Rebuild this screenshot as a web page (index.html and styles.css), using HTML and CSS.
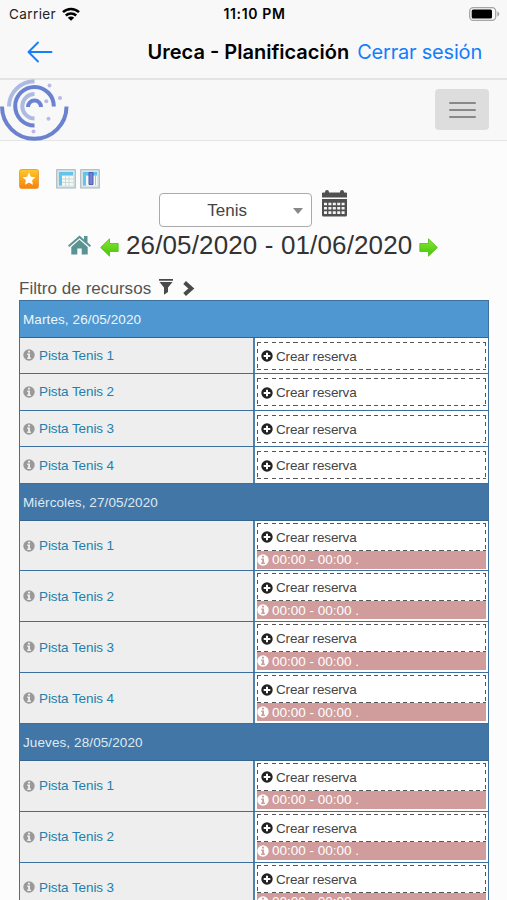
FILE: index.html
```html
<!DOCTYPE html>
<html lang="es">
<head>
    <meta charset="UTF-8">
    <meta name="viewport" content="width=device-width, initial-scale=1.0">
    <title>Ureca - Planificación</title>
    <link rel="stylesheet" href="styles.css">
</head>
<body>
    <!-- Shared icons -->
    <svg class="icon-defs" width="0" height="0">
        <symbol id="icon-info" viewBox="0 0 12 12">
            <path fill="currentColor" fill-rule="evenodd" d="M6 .3a5.7 5.7 0 1 0 0 11.4A5.7 5.7 0 0 0 6 .3zM5 1.8h2v1.6H5zM4.2 4.6H7v3.9h.9V10H4.2V8.5h.9V6h-.9z"/>
        </symbol>
        <symbol id="icon-plus" viewBox="0 0 12 12">
            <path fill="currentColor" fill-rule="evenodd" d="M6 .3a5.7 5.7 0 1 0 0 11.4A5.7 5.7 0 0 0 6 .3zM5 2.7h2V5h2.3v2H7v2.3H5V7H2.7V5H5z"/>
        </symbol>
        <symbol id="icon-arrow" viewBox="0 0 18 18">
            <path fill="url(#green)" stroke="#4fc01c" stroke-width=".8" stroke-linejoin="round" d="M.6 9 9 .8v4.400h8.200v7.600H9v4.400z"/>
        </symbol>
        <linearGradient id="green" x1="0" y1="0" x2="0" y2="1">
            <stop offset="0" stop-color="#8fe43a"/>
            <stop offset="1" stop-color="#3fc800"/>
        </linearGradient>
        <linearGradient id="orange" x1="0" y1="0" x2="0" y2="1">
            <stop offset="0" stop-color="#ffc928"/>
            <stop offset="1" stop-color="#f5820b"/>
        </linearGradient>
    </svg>

    <header class="app-header">
        <div class="status-bar">
            <div class="carrier">
                Carrier
                <svg width="18" height="14" viewBox="0 0 18 14" fill="none" stroke="#000" stroke-width="2.500">
                    <path d="M1 5.200a11.500 11.500 0 0 1 16 0M3.800 8.500a7.500 7.500 0 0 1 10.400 0"/>
                    <path fill="#000" stroke="none" d="M9 13.700 5.800 10.700a4.600 4.600 0 0 1 6.400 0z"/>
                </svg>
            </div>
            <div class="clock">11:10 PM</div>
            <svg class="battery" width="31" height="14" viewBox="0 0 31 14">
                <rect x=".7" y=".7" width="26" height="12.600" rx="3.500" fill="none" stroke="#a5a5a5" stroke-width="1.300"/>
                <rect x="2.700" y="2.500" width="20.300" height="9" rx="1.500"/>
                <path fill="#a5a5a5" d="M28.300 4.500c2.700.8 2.700 4.200 0 5z"/>
            </svg>
        </div>
        <div class="nav-bar">
            <svg class="back" width="26" height="22" viewBox="0 0 26 22" fill="none" stroke="#147efb" stroke-width="1.900" stroke-linecap="round" stroke-linejoin="round">
                <path d="M24.500 11H1.500M11 1.500 1.500 11l9.500 9.500"/>
            </svg>
            <div class="nav-title">Ureca - Planificación</div>
            <a class="logout">Cerrar sesión</a>
        </div>
    </header>

    <div class="site-bar">
        <svg class="logo" width="70" height="62" viewBox="0 0 70 62" fill="none" stroke-width="4">
            <path stroke="#6a82d0" d="M2 27.500a32 32 0 0 0 64.500 0" />
            <path stroke="#adbbe3" d="M34.500 2.200A25.500 25.500 0 0 0 9 27.500M34.500 15A12 12 0 0 0 34.500 39.500"/>
            <path stroke="#6a82d0" d="M34.500 46.500A19.300 19.300 0 1 1 53.800 27.500M28 28a6.500 6.500 0 0 1 13 0"/>
            <g fill="#b8b9e6">
                <circle cx="49.500" cy="6.500" r="2"/>
                <circle cx="60" cy="19" r="2"/>
                <circle cx="46.300" cy="22.300" r="2"/>
                <circle cx="48.500" cy="39.700" r="2"/>
                <circle cx="33.500" cy="52.500" r="2"/>
            </g>
        </svg>
        <button class="menu-button">
            <span></span>
            <span></span>
            <span></span>
        </button>
    </div>

    <main class="content">
        <div class="toolbar">
            <svg width="20" height="20" viewBox="0 0 20 20">
                <rect x=".5" y=".5" width="19" height="19" rx="2" fill="url(#orange)" stroke="#eda04a"/>
                <path fill="#fff" d="m10 3.500 1.900 4.200 4.600.5-3.400 3.100.9 4.500-4-2.300-4 2.300.9-4.500-3.400-3.100 4.600-.5z"/>
            </svg>
            <svg class="view-icon" width="20" height="20" viewBox="0 0 20 20">
                <rect x=".7" y=".7" width="18.600" height="18.300" fill="#d8e5e8" stroke="#a9b4b7"/>
                <path fill="#f5f8f3" d="M6 6.500h11v10H6z"/>
                <path fill="#62c4ec" d="M3 3h14v3.500H6v10H3z"/>
                <path stroke="#cbdad6" d="M6 10h11M6 13.500h11M9.500 7v10M13 7v10" fill="none"/>
            </svg>
            <svg width="20" height="20" viewBox="0 0 20 20">
                <rect x=".7" y=".7" width="18.600" height="18.300" fill="#d8e5e8" stroke="#a9b4b7"/>
                <path fill="#f5f8f3" d="M6 6.500h11v10H6z"/>
                <path fill="#62c4ec" d="M3 3h14v3.500H6v10H3z"/>
                <path fill="#7180d0" stroke="#4e5bb5" d="M9 3.500h4v12H9z"/>
                <path stroke="#9ccbd8" d="M15.500 6v10"/>
            </svg>
        </div>

        <div class="picker">
            <div class="select">
                <span>Tenis</span>
                <i class="caret"></i>
            </div>
            <svg width="25" height="27" viewBox="0 0 25 27">
                <path fill="#505050" d="M1 2.500h2V2a1.700 1.700 0 0 1 4 0v.5h11V2a1.700 1.700 0 0 1 4 0v.5h2a1 1 0 0 1 1 1v4H0v-4a1 1 0 0 1 1-1zM0 9h25v16a1.500 1.500 0 0 1-1.500 1.500h-22A1.500 1.500 0 0 1 0 25z"/>
                <path fill="none" stroke="#f4f4f4" stroke-width="2.600" stroke-dasharray="3 1.400" d="M2 14h21M2 18.300h21M2 22.600h21"/>
            </svg>
        </div>

        <div class="week">
            <svg class="home" width="23" height="20" viewBox="0 0 23 20">
                <path fill="#5b9292" d="M0 10.500 11.500.5l4.500 4V1h3.500v6.500l3.500 3-1.200 1.500L11.500 3.200 1.200 12z"/>
                <path fill="#5b9292" d="m3.300 12 8.200-7.200 8.200 7.200v7.500h-6v-6H9.300v6h-6z"/>
            </svg>
            <svg class="prev" width="19" height="19"><use href="#icon-arrow"/></svg>
            <span class="week-range">26/05/2020 - 01/06/2020</span>
            <svg class="next" width="19" height="19"><use href="#icon-arrow"/></svg>
        </div>

        <div class="filter">
            <span>Filtro de recursos</span>
            <svg class="funnel" width="14" height="16" viewBox="0 0 14 16" fill="#4a4a4a">
                <path d="M0 0h14v1.800H0zM.5 3h13L9 8.500V13l-4 2.800V8.500z"/>
            </svg>
            <svg class="chevron" width="12" height="15" viewBox="0 0 12 15">
                <path fill="none" stroke="#4a4a4a" stroke-width="4" d="M1.600 1.500 8.300 7.500l-6.700 6"/>
            </svg>
        </div>

        <div class="planning">
            <div class="day today">Martes, 26/05/2020</div>
            <div class="row">
                <div class="resource"><svg><use href="#icon-info"/></svg>Pista Tenis 1</div>
                <div class="slots"><div class="create"><svg><use href="#icon-plus"/></svg>Crear reserva</div></div>
            </div>
            <div class="row">
                <div class="resource"><svg><use href="#icon-info"/></svg>Pista Tenis 2</div>
                <div class="slots"><div class="create"><svg><use href="#icon-plus"/></svg>Crear reserva</div></div>
            </div>
            <div class="row">
                <div class="resource"><svg><use href="#icon-info"/></svg>Pista Tenis 3</div>
                <div class="slots"><div class="create"><svg><use href="#icon-plus"/></svg>Crear reserva</div></div>
            </div>
            <div class="row">
                <div class="resource"><svg><use href="#icon-info"/></svg>Pista Tenis 4</div>
                <div class="slots"><div class="create"><svg><use href="#icon-plus"/></svg>Crear reserva</div></div>
            </div>

            <div class="day">Miércoles, 27/05/2020</div>
            <div class="row busy">
                <div class="resource"><svg><use href="#icon-info"/></svg>Pista Tenis 1</div>
                <div class="slots">
                    <div class="create"><svg><use href="#icon-plus"/></svg>Crear reserva</div>
                    <div class="booking"><svg><use href="#icon-info"/></svg>00:00 - 00:00 .</div>
                </div>
            </div>
            <div class="row busy">
                <div class="resource"><svg><use href="#icon-info"/></svg>Pista Tenis 2</div>
                <div class="slots">
                    <div class="create"><svg><use href="#icon-plus"/></svg>Crear reserva</div>
                    <div class="booking"><svg><use href="#icon-info"/></svg>00:00 - 00:00 .</div>
                </div>
            </div>
            <div class="row busy">
                <div class="resource"><svg><use href="#icon-info"/></svg>Pista Tenis 3</div>
                <div class="slots">
                    <div class="create"><svg><use href="#icon-plus"/></svg>Crear reserva</div>
                    <div class="booking"><svg><use href="#icon-info"/></svg>00:00 - 00:00 .</div>
                </div>
            </div>
            <div class="row busy">
                <div class="resource"><svg><use href="#icon-info"/></svg>Pista Tenis 4</div>
                <div class="slots">
                    <div class="create"><svg><use href="#icon-plus"/></svg>Crear reserva</div>
                    <div class="booking"><svg><use href="#icon-info"/></svg>00:00 - 00:00 .</div>
                </div>
            </div>

            <div class="day">Jueves, 28/05/2020</div>
            <div class="row busy">
                <div class="resource"><svg><use href="#icon-info"/></svg>Pista Tenis 1</div>
                <div class="slots">
                    <div class="create"><svg><use href="#icon-plus"/></svg>Crear reserva</div>
                    <div class="booking"><svg><use href="#icon-info"/></svg>00:00 - 00:00 .</div>
                </div>
            </div>
            <div class="row busy">
                <div class="resource"><svg><use href="#icon-info"/></svg>Pista Tenis 2</div>
                <div class="slots">
                    <div class="create"><svg><use href="#icon-plus"/></svg>Crear reserva</div>
                    <div class="booking"><svg><use href="#icon-info"/></svg>00:00 - 00:00 .</div>
                </div>
            </div>
            <div class="row busy">
                <div class="resource"><svg><use href="#icon-info"/></svg>Pista Tenis 3</div>
                <div class="slots">
                    <div class="create"><svg><use href="#icon-plus"/></svg>Crear reserva</div>
                    <div class="booking"><svg><use href="#icon-info"/></svg>00:00 - 00:00 .</div>
                </div>
            </div>
        </div>
    </main>
</body>
</html>
```

FILE: styles.css
```css
* {
    box-sizing: border-box;
}
body {
    margin: 0;
    height: 900px;
    overflow: hidden;
    background: #fcfcfc;
    color: #333;
    font-family: "Liberation Sans", Arial, sans-serif;
}
svg {
    display: block;
    flex: none;
}
.icon-defs {
    position: absolute;
}

/* App header */
.app-header {
    height: 80px;
    background: #f8f8f8;
    border-bottom: 2px solid #e4e4e4;
    font-family: Inter, "Liberation Sans", sans-serif;
    color: #000;
}
.status-bar {
    display: grid;
    grid-template-columns: 1fr auto 1fr;
    align-items: center;
    height: 27px;
    padding: 0 7px 0 9px;
    font-size: 13.5px;
}
.carrier {
    display: flex;
    align-items: center;
    gap: 6px;
    color: #222;
    letter-spacing: 0.4px;
}
.clock {
    font-weight: 600;
    font-size: 14px;
    letter-spacing: 0.65px;
}
.battery {
    justify-self: end;
}
.nav-bar {
    display: flex;
    align-items: center;
    height: 50px;
    padding: 0 25px 0 27px;
    white-space: nowrap;
    font-size: 20px;
}
.nav-title {
    margin-left: auto;
    font-weight: 600;
    letter-spacing: 0;
}
.logout {
    margin-left: 8px;
    color: #147efb;
    letter-spacing: -0.2px;
}

/* Site bar */
.site-bar {
    display: flex;
    justify-content: space-between;
    height: 61px;
    padding-right: 18px;
    background: #f8f8f8;
    border-bottom: 1px solid #e4e4e4;
}
.logo {
    margin-top: -1px;
}
.menu-button {
    display: flex;
    flex-direction: column;
    align-items: center;
    justify-content: center;
    gap: 5px;
    width: 54px;
    height: 41px;
    margin-top: 9px;
    padding: 0;
    border: none;
    border-radius: 4px;
    background: #ddd;
}
.menu-button span {
    width: 27px;
    height: 2px;
    border-radius: 1px;
    background: #888;
}

/* Content */
.content {
    padding: 28px 18px 0 19px;
}
.toolbar {
    display: flex;
    gap: 4px;
    height: 24px;
}
.view-icon {
    margin-left: 13px;
}
.picker {
    display: flex;
    gap: 10px;
    padding-left: 140px;
}
.picker svg {
    margin-top: -3px;
}
.select {
    display: flex;
    align-items: center;
    justify-content: flex-end;
    gap: 46px;
    width: 153px;
    height: 34px;
    padding: 2px 8px 0 0;
    border: 1px solid #aaa;
    border-radius: 4px;
    background: #fff;
    color: #444;
    font-size: 17px;
}
.caret {
    border: 5px solid transparent;
    border-top: 6px solid #888;
    border-bottom: none;
}
.week {
    display: flex;
    align-items: center;
    height: 36px;
    padding-left: 49px;
    white-space: nowrap;
}
.prev {
    margin: 4px 7px 0 9px;
}
.next {
    margin: 4px 0 0 7px;
    transform: scaleX(-1);
}
.week-range {
    font-size: 26px;
    letter-spacing: 0.13px;
}
.filter {
    display: flex;
    align-items: center;
    height: 37px;
    padding-top: 14px;
    color: #555;
    font-size: 17px;
    letter-spacing: 0.05px;
}
.funnel {
    margin: -3px 10px 0 8px;
}

/* Planning table */
.planning {
    width: 470px;
    border: solid #3c71a0;
    border-width: 1px 1px 0;
    font-size: 13.5px;
}
.day {
    height: 36.6px;
    padding-left: 3px;
    border-bottom: 1px solid #33658f;
    background: #4276a6;
    color: #dfeaf4;
    line-height: 37px;
    letter-spacing: 0.1px;
}
.day.today {
    background: #4f97d1;
    color: #eef6fc;
}
.row {
    display: flex;
    height: 36.6px;
    border-bottom: 1.5px solid #3c6f9e;
}
.row.busy {
    height: 50.9px;
}
.resource {
    display: flex;
    align-items: center;
    gap: 4px;
    width: 235px;
    padding-left: 3px;
    border-right: 2px solid #4b82b0;
    background: #eee;
    color: #2380ab;
    letter-spacing: -0.1px;
}
.resource svg {
    width: 12px;
    height: 12px;
    color: #999;
}
.slots {
    flex: 1;
    display: flex;
    flex-direction: column;
    padding: 4px 2px 0;
    background: #fff;
}
.busy .slots {
    padding-top: 2px;
}
/* dashed outline drawn with gradients to get longer dashes */
.create {
    --dash-x: repeating-linear-gradient(90deg, #555 0 4px, transparent 4px 7.3px);
    --dash-y: repeating-linear-gradient(#555 0 4px, transparent 4px 7.3px);
    display: flex;
    align-items: center;
    gap: 3px;
    height: 28px;
    padding: 1px 0 0 4px;
    background:
        var(--dash-x) top / 100% 1px no-repeat,
        var(--dash-x) bottom / 100% 1px no-repeat,
        var(--dash-y) left / 1px 100% no-repeat,
        var(--dash-y) right / 1px 100% no-repeat;
    color: #444;
    letter-spacing: -0.15px;
}
.create svg {
    width: 12px;
    height: 12px;
    color: #222;
}
.booking {
    display: flex;
    align-items: center;
    gap: 3px;
    height: 18px;
    background: #d09c9c;
    color: #fff;
}
.booking svg {
    width: 12px;
    height: 12px;
}
```
